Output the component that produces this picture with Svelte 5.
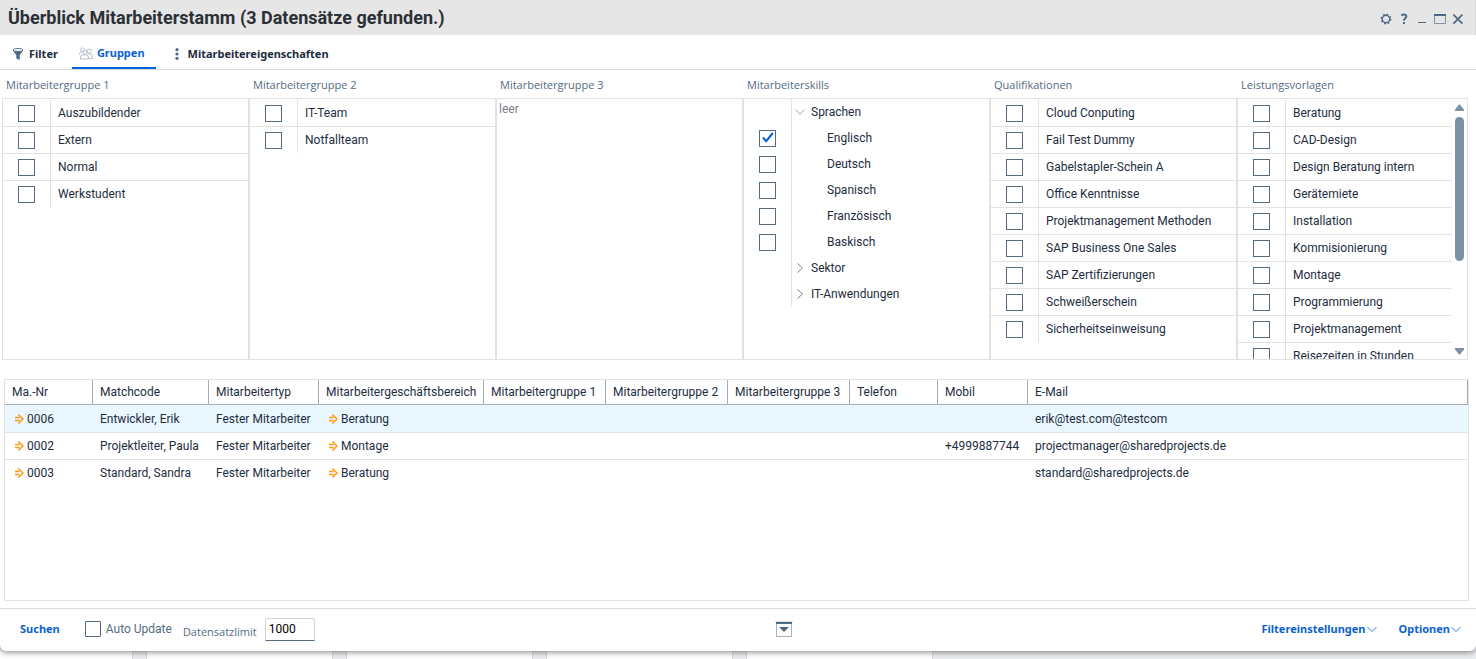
<script>
  const groups = [
    { title: 'Mitarbeitergruppe 1', items: ['Auszubildender', 'Extern', 'Normal', 'Werkstudent'] },
    { title: 'Mitarbeitergruppe 2', items: ['IT-Team', 'Notfallteam'] },
    { title: 'Mitarbeitergruppe 3', items: [] },
    {
      title: 'Mitarbeiterskills',
      tree: [
        { label: 'Sprachen', open: true },
        { label: 'Englisch', leaf: true, checked: true },
        { label: 'Deutsch', leaf: true },
        { label: 'Spanisch', leaf: true },
        { label: 'Französisch', leaf: true },
        { label: 'Baskisch', leaf: true },
        { label: 'Sektor' },
        { label: 'IT-Anwendungen' }
      ]
    },
    {
      title: 'Qualifikationen',
      items: ['Cloud Conputing', 'Fail Test Dummy', 'Gabelstapler-Schein A', 'Office Kenntnisse', 'Projektmanagement Methoden', 'SAP Business One Sales', 'SAP Zertifizierungen', 'Schweißerschein', 'Sicherheitseinweisung']
    },
    {
      title: 'Leistungsvorlagen',
      scroll: true,
      items: ['Beratung', 'CAD-Design', 'Design Beratung intern', 'Gerätemiete', 'Installation', 'Kommisionierung', 'Montage', 'Programmierung', 'Projektmanagement', 'Reisezeiten in Stunden']
    }
  ];

  const columns = [
    ['Ma.-Nr', 88], ['Matchcode', 116], ['Mitarbeitertyp', 110], ['Mitarbeitergeschäftsbereich', 165],
    ['Mitarbeitergruppe 1', 122], ['Mitarbeitergruppe 2', 122], ['Mitarbeitergruppe 3', 122],
    ['Telefon', 88], ['Mobil', 90], ['E-Mail', null]
  ];

  const rows = [
    ['0006', 'Entwickler, Erik', 'Fester Mitarbeiter', 'Beratung', '', '', '', '', '', 'erik@test.com@testcom'],
    ['0002', 'Projektleiter, Paula', 'Fester Mitarbeiter', 'Montage', '', '', '', '', '+4999887744', 'projectmanager@sharedprojects.de'],
    ['0003', 'Standard, Sandra', 'Fester Mitarbeiter', 'Beratung', '', '', '', '', '', 'standard@sharedprojects.de']
  ];
  const linked = [0, 3];
</script>

<div class="desktop">
  <main class="window">
    <header class="titlebar">
      <h1>Überblick Mitarbeiterstamm (3 Datensätze gefunden.)</h1>
      <div class="tools">
        <button aria-label="Einstellungen">
          <svg width="12" height="12" viewBox="0 0 12 12"><circle cx="6" cy="6" r="4.6" fill="none" stroke="#4f6a85" stroke-width="1.6" stroke-dasharray="1.8 1.8" /><circle cx="6" cy="6" r="3.7" fill="none" stroke="#4f6a85" stroke-width="1.4" /></svg>
        </button>
        <button aria-label="Hilfe">
          <svg width="12" height="12" viewBox="0 0 12 12"><path d="M3.4 2.6C4.4 1 8.3 1.1 8.3 3.6C8.3 5.5 6 5.2 6 7.8" fill="none" stroke="#4f6a85" stroke-width="2" /><path d="M5 9h2v2H5z" fill="#4f6a85" /></svg>
        </button>
        <button aria-label="Minimieren">
          <svg width="12" height="12" viewBox="0 0 12 12"><path d="M2 9h8v1H2z" fill="#4f6a85" /></svg>
        </button>
        <button aria-label="Maximieren">
          <svg width="12" height="12" viewBox="0 0 12 12"><path d="M.5 1.5h11v9H.5z" fill="none" stroke="#8295a8" /><path d="M0 1h12v2H0z" fill="#4f6a85" /></svg>
        </button>
        <button aria-label="Schließen">
          <svg width="12" height="12" viewBox="0 0 12 12"><path d="M1.4 1.6l9 9M10.4 1.6l-9 9" stroke="#4f6a85" stroke-width="1.8" /></svg>
        </button>
      </div>
    </header>

    <nav class="tabs">
      <button class="tab">
        <svg width="12" height="12" viewBox="0 0 12 12"><ellipse cx="6" cy="2" rx="5" ry="1.5" fill="#fff" stroke="#5d738a" /><path d="M.8 2.6C3 4 9 4 11.2 2.6L7.7 7.2V12L4.3 10.4V7.2z" fill="#4f6a85" /></svg>
        Filter
      </button>
      <button class="tab active">
        <svg width="14" height="13" viewBox="0 0 14 13" fill="none" stroke="#b4bfca"><circle cx="3.4" cy="2.7" r="1.8" /><circle cx="10.2" cy="4.2" r="2.1" /><circle cx="6" cy="5.4" r="2.1" /><path d="M.5 7.5V6Q1.5 4.6 3.5 5M1.5 12V10Q1.5 7.6 4.5 7.8H7.5Q9.5 8 9.5 12zM9.6 7.2H12Q13.5 7.4 13.5 11.5H9.5" /></svg>
        Gruppen
      </button>
      <button class="tab">
        <svg width="12" height="12" viewBox="0 0 12 12" fill="#4f6a85"><circle cx="6" cy="1.7" r="1.6" /><circle cx="6" cy="6" r="1.6" /><circle cx="6" cy="10.3" r="1.6" /></svg>
        Mitarbeitereigenschaften
      </button>
    </nav>

    <div class="groups">
      {#each groups as group, g}
        <section class="group">
          <h2>{group.title}</h2>
          <div class="panel">
            {#if group.tree}
              <ul class="tree">
                {#each group.tree as node, n}
                  <li>
                    <span class="tick">
                      {#if node.leaf}<input type="checkbox" id="s{n}" checked={node.checked} />{/if}
                    </span>
                    {#if node.leaf}
                      <label class="leaf" for="s{n}">{node.label}</label>
                    {:else}
                      <button class="branch" aria-expanded={!!node.open}>
                        <svg width="12" height="12" viewBox="0 0 12 12" fill="none">
                          {#if node.open}<path d="M1.5 3.5L6 8.3L10.5 3.5" stroke="#8aa0d0" />{:else}<path d="M3.5 1.5L8.5 6L3.5 10.5" stroke="#7d8186" />{/if}
                        </svg>
                        {node.label}
                      </button>
                    {/if}
                  </li>
                {/each}
              </ul>
            {:else if group.items.length}
              <ul class="list">
                {#each group.items as item, i}
                  <li>
                    <span class="tick"><input type="checkbox" id="g{g}-{i}" /></span>
                    <label for="g{g}-{i}">{item}</label>
                  </li>
                {/each}
              </ul>
            {:else}
              <p class="empty">leer</p>
            {/if}
            {#if group.scroll}
              <div class="scrollbar">
                <svg width="9" height="7" viewBox="0 0 9 7"><path d="M4.5 0L9 5.5V7H0V5.5z" fill="#7b91a8" /></svg>
                <div class="track"><div class="thumb"></div></div>
                <svg width="9" height="7" viewBox="0 0 9 7"><path d="M4.5 7L9 1.5V0H0V1.5z" fill="#7b91a8" /></svg>
              </div>
            {/if}
          </div>
        </section>
      {/each}
    </div>

    <div class="results">
      <table>
        <colgroup>
          {#each columns as [, width]}<col style={width ? `width:${width}px` : ''} />{/each}
        </colgroup>
        <thead>
          <tr>{#each columns as [name]}<th scope="col">{name}</th>{/each}</tr>
        </thead>
        <tbody>
          {#each rows as row, r}
            <tr class:selected={r === 0}>
              {#each row as cell, c}
                <td>
                  {#if linked.includes(c)}
                    <span class="link">
                      <svg width="10" height="10" viewBox="0 0 10 10" fill="none" stroke="#ff9a0d" stroke-width="1.4"><path d="M1 3.5H5.6M1 6.5H5.6M4.4 .4L9 5L4.4 9.6" /></svg>{cell}
                    </span>
                  {:else}{cell}{/if}
                </td>
              {/each}
            </tr>
          {/each}
        </tbody>
      </table>
    </div>

    <footer>
      <div class="search">
        <button class="action">Suchen</button>
        <label class="auto"><input type="checkbox" />Auto Update</label>
        <label class="limit" for="limit">Datensatzlimit</label>
        <input id="limit" type="text" value="1000" />
      </div>
      <button class="collapse" aria-label="Einklappen">
        <svg width="18" height="17" viewBox="0 0 18 17"><path d="M1.5 2.5h15v13h-15z" fill="#fff" stroke="#a3b1bf" /><path d="M0 0h18v1H0z" fill="#d6dce2" /><path d="M1 1h16v2H1z" fill="#4f6a85" /><path d="M4 6h10l-5 5z" fill="#4f6a85" /></svg>
      </button>
      <div class="menus">
        {#each ['Filtereinstellungen', 'Optionen'] as name}
          <button class="action">{name}<svg width="10" height="10" viewBox="0 0 10 10" fill="none"><path d="M.5 3L5 7.5L9.5 3" stroke="#2d86e0" /></svg></button>
        {/each}
      </div>
    </footer>
  </main>
  <div class="backdrop">
    {#each [132, 185, 185, 185, 185] as width}<span style="width:{width}px"></span>{/each}
  </div>
</div>

<style>
  :global(body) { margin: 0; }
  .desktop {
    min-height: 100vh;
    display: flex;
    flex-direction: column;
    background: #eaecef;
    font: 12px/16px Roboto, "Liberation Sans", sans-serif;
    color: #1d2d3e;
  }
  button { border: 0; background: none; padding: 0; margin: 0; font: inherit; color: inherit; display: flex; align-items: center; }
  h1, h2, ul, p { margin: 0; padding: 0; }
  .window {
    flex: 1;
    display: flex;
    flex-direction: column;
    background: #fff;
    border-radius: 0 0 6px 6px;
    box-shadow: 0 1px 6px rgba(0, 0, 0, 0.5);
    z-index: 1;
  }
  .titlebar { height: 35px; display: flex; align-items: center; justify-content: space-between; background: #e6e6e6; padding: 0 11px 0 8px; border-right: 1px solid #d9d9d9; box-sizing: border-box; }
  h1 { font-size: 18px; line-height: 24px; font-weight: 700; color: #2b3036; }
  .tools { display: flex; gap: 6px; padding-top: 2px; }

  .tabs { height: 34px; display: flex; padding-left: 5px; border-bottom: 1px solid #d9d9d9; font: 700 11px/16px "Noto Sans", "Open Sans", sans-serif; }
  .tab { gap: 5px; padding: 4px 7px 0; }
  .tab.active { color: #0a62cf; border-bottom: 2px solid #0064d9; gap: 4px; margin: 0 8px 0 7px; padding-right: 11px; }

  .groups { display: grid; grid-template-columns: repeat(5, minmax(0, 247fr)) minmax(0, 231fr); padding: 0 8px 0 2px; }
  h2 { font: 11px/28px "Open Sans", "Noto Sans", sans-serif; height: 28px; padding: 1px 4px 0; box-sizing: border-box; color: #556b82; }
  .panel { height: 260px; border: 1px solid #e2e2e2; overflow: hidden; display: flex; align-items: flex-start; }
  ul { list-style: none; flex: 1; min-width: 0; }
  .list { padding-top: 1px; }
  li { display: flex; height: 27px; box-sizing: border-box; border-bottom: 1px solid #e2e2e2; align-items: stretch; white-space: nowrap; }
  li:last-child { border-bottom-color: transparent; }
  .tree li { height: 26px; border: 0; }
  .tick { flex: none; width: 48px; box-sizing: border-box; border-right: 1px solid #e2e2e2; display: flex; align-items: center; justify-content: center; padding-top: 1px; }
  .tree .tick { padding-top: 0; }
  li label { padding: 5px 7px 0; }
  .tree label.leaf { padding: 5px 0 0 35px; }
  .branch { gap: 5px; padding-left: 2px; }

  input[type='checkbox'] { appearance: none; flex: none; width: 17px; height: 17px; margin: 0; border: 1px solid #556b82; background: #fff; }
  input[type='checkbox']:checked {
    background: #fff url("data:image/svg+xml,%3Csvg xmlns='http://www.w3.org/2000/svg' viewBox='0 0 15 15'%3E%3Cpath d='M3 6.5l3.2 3.6L12.8 2' fill='none' stroke='%230064d9' stroke-width='2'/%3E%3C/svg%3E");
  }
  .empty { padding: 2px; color: #7b828a; }

  .scrollbar { align-self: stretch; width: 15px; box-sizing: border-box; padding: 5px 3px 4px; display: flex; flex-direction: column; align-items: center; gap: 6px; }
  .track { flex: 1; width: 9px; }
  .thumb { height: 64%; border-radius: 5px; background: #7b91a8; }

  .results { flex: 1; margin: 19px 7px 7px 4px; border: 1px solid #e2e2e2; }
  table { width: 100%; table-layout: fixed; border-collapse: separate; border-spacing: 0; }
  th, td { height: 26px; padding: 0 0 0 7px; text-align: left; font-weight: 400; white-space: nowrap; border-bottom: 1px solid #e2e2e2; }
  th { height: 24px; border-right: 1px solid #a3aebb; border-bottom-color: #a3aebb; }
  .selected td { height: 27px; background: #eaf7ff; }
  tr:last-child td { border-bottom: 0; }
  .link { display: flex; align-items: center; gap: 3px; padding-left: 2px; }

  footer { height: 42px; display: flex; align-items: center; justify-content: space-between; padding: 0 15px 0 20px; border-top: 1px solid #d9d9d9; border-radius: 0 0 6px 6px; color: #556b82; }
  .search, .menus, .auto { display: flex; align-items: center; }
  .search, .menus, .collapse { padding-bottom: 2px; }
  .action { gap: 1px; font: 700 11px/16px "Noto Sans", "Open Sans", sans-serif; color: #0a62cf; }
  .auto { margin-left: 25px; gap: 5px; }
  .auto input { width: 16px; height: 16px; border-radius: 1px; }
  .limit { margin-left: 11px; padding-top: 6px; font: 11px/16px "Open Sans", "Noto Sans", sans-serif; }
  #limit { width: 50px; height: 23px; box-sizing: border-box; margin: 0 0 0 8px; padding: 0 3px; border: 1px solid #d0d5db; border-bottom-color: #556b82; border-radius: 3px 3px 0 0; font: inherit; color: #000; }
  .collapse { margin-right: 8px; }
  .menus { gap: 22px; }

  .backdrop { height: 8px; display: flex; gap: 15px; overflow: hidden; }
  .backdrop span { flex: none; background: #fff; box-shadow: 0 0 0 1px #d5d9de; }
</style>
